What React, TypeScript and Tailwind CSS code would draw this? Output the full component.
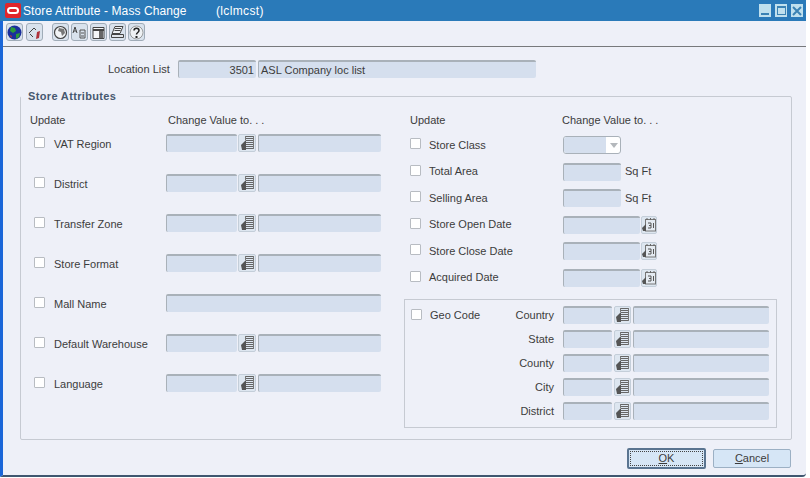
import React from "react";

// Small helpers for the form widgets
const Field = ({ className = "", value }: { className?: string; value?: string }) => (
  <div
    className={`h-[18px] bg-[#d5dfee] border-t-2 border-l border-[#a9b1b9] rounded-[2px] text-[11px] leading-[16px] px-[2px] text-[#3c3c3c] ${className}`}
  >
    {value}
  </div>
);

const LovIcon = ({ className = "w-[17px]" }: { className?: string }) => (
  <div className={`h-[18px] shrink-0 bg-[#dde6f0] border border-[#c4ced9] rounded-[2px] flex items-center justify-center ${className}`}>
    <svg width="15" height="16" viewBox="0 0 15 16">
      <path d="M5 1.500h9M5 3.500h9M6 5.500h8M6 7.500h8M6 9.500h8M6 11.500h8M6 13.500h8" stroke="#666" strokeWidth="1" />
      <path d="M13.500 1v13M5.500 1v4" stroke="#777" strokeWidth="1" />
      <path d="M1 10l5-5v10H2z" fill="#555" />
    </svg>
  </div>
);

const CalIcon = () => (
  <div className="w-[16px] h-[18px] ml-[1px] bg-[#dde6f0] border border-[#c4ced9] rounded-[2px] flex items-center justify-center">
    <svg width="14" height="16" viewBox="0 0 14 16">
      <rect x="3.500" y="2.500" width="10" height="11.500" fill="#e4eaf1" stroke="#777" />
      <path d="M5 1v2M8.500 1v2M12 1v2" stroke="#666" />
      <path d="M6 6h3v2.500H7M9 8.500V11H6M11.500 6v5" stroke="#555" fill="none" />
      <path d="M0 11l4-4v7H1z" fill="#555" />
    </svg>
  </div>
);

const Check = ({ className = "" }: { className?: string }) => (
  <div className={`w-[11px] h-[11px] shrink-0 bg-white border border-[#b8bcc2] rounded-[1px] ${className}`} />
);

const LovField = ({ mall }: { mall?: boolean }) =>
  mall ? (
    <Field className="w-[215px]" />
  ) : (
    <div className="flex gap-[1px]">
      <Field className="w-[71px]" />
      <LovIcon className="w-[18px]" />
      <Field className="w-[123px] ml-[1px]" />
    </div>
  );

const leftRows = ["VAT Region", "District", "Transfer Zone", "Store Format", "Mall Name", "Default Warehouse", "Language"];
const geoRows = ["Country", "State", "County", "City", "District"];

const RightRow = ({ label, children }: { label: string; children: React.ReactNode }) => (
  <div className="flex items-center h-[18px]">
    <Check className="ml-[6px] -mt-[3px]" />
    <span className="ml-[8px] w-[134px]">{label}</span>
    {children}
  </div>
);

const ToolBtn = ({ children, className = "" }: { children: React.ReactNode; className?: string }) => (
  <div className={`w-[17px] h-[18px] bg-[#d9e2ed] border border-[#a0acb8] rounded-[3px] flex items-center justify-center ${className}`}>
    <svg width="15" height="15" viewBox="0 0 15 15">
      {children}
    </svg>
  </div>
);

export default function App() {
  return (
    <div className="w-[810px] h-[478px] bg-white font-['Liberation_Sans',Arial,sans-serif] text-[11px] text-[#3c3c3c] overflow-hidden">
      <div className="w-[806px] h-[477px] bg-[#eef0f8] border-l-[3px] border-b-2 border-l-[#1a66d8] border-b-[#3f5770] rounded-br-[4px] flex flex-col">
        {/* Title bar */}
        <div className="h-[21px] -ml-[3px] bg-[#2a7ab9] flex items-center text-white text-[12px] tracking-[0.1px] shrink-0">
          <div className="ml-[5px] w-[16px] h-[15px] bg-[#e0252b] rounded-[2px] flex items-center justify-center">
            <div className="w-[12px] h-[7px] border-2 border-white rounded-full" />
          </div>
          <span className="ml-[2px] w-[193px]">Store Attribute - Mass Change</span>
          <span className="tracking-[0.35px]">(lclmcst)</span>
          <div className="ml-auto mr-[3px] flex gap-[4px]">
            <div className="w-[12px] h-[13px] bg-[#bfe0ee] flex items-end justify-center pb-[2px]">
              <div className="w-[8px] h-[2px] bg-[#3a82b4]" />
            </div>
            <div className="w-[12px] h-[13px] bg-[#bfe0ee] flex items-center justify-center">
              <div className="w-[9px] h-[9px] border border-t-2 border-[#3a82b4]" />
            </div>
            <div className="w-[12px] h-[13px] bg-[#bfe0ee] flex items-center justify-center">
              <svg width="10" height="10" viewBox="0 0 10 10">
                <path d="M1 1l8 8M9 1l-8 8" stroke="#3a82b4" strokeWidth="2" />
              </svg>
            </div>
          </div>
        </div>

        {/* Toolbar */}
        <div className="h-[22px] flex items-center pl-[3px] gap-[2px] shrink-0">
          <ToolBtn>
            <circle cx="7.500" cy="7.500" r="7" fill="#1a2f9c" />
            <path d="M4 2l4 1 1 3-3 2-3-2zM9 9l4-1-1 4-3 2z" fill="#2a9a3a" />
            <path d="M3 10l2 1-1 2z" fill="#c8342c" />
          </ToolBtn>
          <ToolBtn className="ml-[1px]">
            <path d="M2 8l5-5 2 2M3 9l3 3" stroke="#444" strokeWidth="1" fill="none" />
            <path d="M10 7l3-1-1 7-3 1z" fill="#b0333c" />
          </ToolBtn>
          <ToolBtn className="ml-[7px]">
            <circle cx="7.500" cy="7.500" r="6" fill="#f2f4f6" stroke="#444" strokeWidth="1.200" />
            <path d="M6 3l5 1 1 4-3 3-1-4-3-1z" fill="#777" />
          </ToolBtn>
          <ToolBtn>
            <path d="M1 8l2-6 2 6M2 6h2" stroke="#444" fill="none" />
            <path d="M8 5v8M8 5h5v8H8M9 8h3M9 11h3" stroke="#555" fill="none" />
          </ToolBtn>
          <ToolBtn>
            <path d="M2 2.500h11v11H2z" fill="#f4f6f8" stroke="#444" />
            <path d="M2 5h11" stroke="#444" strokeWidth="2" />
            <path d="M8 6v7h4V6z" fill="#666" />
          </ToolBtn>
          <ToolBtn>
            <path d="M5 1.500h8L10 8.500H2z" fill="#eef1f4" stroke="#444" />
            <path d="M5 3.500h6M4.500 5.500h6" stroke="#444" />
            <path d="M1.500 9.500h12v3h-12z" fill="#dfe3e8" stroke="#444" />
          </ToolBtn>
          <ToolBtn>
            <circle cx="7.500" cy="7.500" r="6.500" fill="#eef1f4" stroke="#888" strokeWidth="0.800" />
            <path d="M5 5.500c0-3 5-3 5 0 0 2-2.500 2-2.500 4" stroke="#222" strokeWidth="1.500" fill="none" />
            <path d="M6.500 11h2v2h-2z" fill="#222" />
          </ToolBtn>
        </div>

        <div className="mt-[3px] border-t border-[#77797c] shrink-0" />

        {/* Location list */}
        <div className="mt-[13px] flex items-center shrink-0">
          <span className="ml-[105px] w-[70px]">Location List</span>
          <Field className="w-[78px] text-right" value="3501" />
          <Field className="w-[278px] ml-[2px]" value="ASL Company loc list" />
        </div>

        {/* Store Attributes panel */}
        <div className="relative ml-[17px] mt-[18px] w-[772px] h-[344px] border border-[#c6cad2] rounded-[2px] flex shrink-0">
          <div className="absolute -top-[8px] left-[0px] pl-[7px] pr-[14px] bg-[#eef0f8] text-[11px] font-bold text-[#47586f] leading-[14px] tracking-[0.35px]">
            Store Attributes
          </div>

          {/* Left column */}
          <div className="w-[383px] pl-[9px] pt-[16px] shrink-0">
            <div className="flex h-[14px] items-center">
              <span className="w-[138px]">Update</span>
              <span>Change Value to. . .</span>
            </div>
            <div className="mt-[7px] flex flex-col gap-[22px]">
              {leftRows.map((label) => (
                <div key={label} className="flex items-center h-[18px]">
                  <Check className="ml-[4px] -mt-[1px]" />
                  <span className="ml-[9px] w-[112px] pt-[2px]">{label}</span>
                  <LovField mall={label === "Mall Name"} />
                </div>
              ))}
            </div>
          </div>

          {/* Right column */}
          <div className="pt-[16px] w-[373px]">
            <div className="flex h-[14px] items-center pl-[6px]">
              <span className="w-[152px]">Update</span>
              <span>Change Value to. . .</span>
            </div>
            <div className="mt-[9px] flex flex-col gap-[8.5px]">
              <RightRow label="Store Class">
                <div className="w-[58px] h-[18px] bg-white border border-[#a9b1b9] rounded-[3px] flex items-center">
                  <div className="w-[42px] h-[16px] bg-[#d5dfee] rounded-l-[2px]" />
                  <div className="ml-[4px] border-x-[4px] border-x-transparent border-t-[5px] border-t-[#b4b8bc]" />
                </div>
              </RightRow>
              <RightRow label="Total Area">
                <Field className="w-[58px]" />
                <span className="ml-[4px]">Sq Ft</span>
              </RightRow>
              <RightRow label="Selling Area">
                <Field className="w-[58px]" />
                <span className="ml-[4px]">Sq Ft</span>
              </RightRow>
              <RightRow label="Store Open Date">
                <Field className="w-[77px]" />
                <CalIcon />
              </RightRow>
              <RightRow label="Store Close Date">
                <Field className="w-[77px]" />
                <CalIcon />
              </RightRow>
              <RightRow label="Acquired Date">
                <Field className="w-[77px]" />
                <CalIcon />
              </RightRow>
            </div>

            {/* Geo code box */}
            <div className="mt-[12px] h-[129px] border border-[#c6cad2] flex pt-[6px]">
              <Check className="ml-[6px] mt-[3px]" />
              <span className="ml-[8px] mt-[1px] w-[60px]">Geo Code</span>
              <div className="flex flex-col gap-[6px]">
                {geoRows.map((label) => (
                  <div key={label} className="flex items-center h-[18px]">
                    <span className="w-[64px] text-right pt-[1px]">{label}</span>
                    <Field className="w-[49px] ml-[9px]" />
                    <LovIcon className="ml-[2px]" />
                    <Field className="w-[136px] ml-[2px]" />
                  </div>
                ))}
              </div>
            </div>
          </div>
        </div>

        {/* Buttons */}
        <div className="mt-[8px] flex justify-end pr-[15px] gap-[7px] items-center shrink-0">
          <button className="w-[79px] h-[21px] bg-[#d6e6f6] border-2 border-[#5a7490] rounded-[2px] p-[1px]">
            <div className="h-full border border-dotted border-[#444] flex items-center justify-center leading-none">
              <span className="underline">O</span>K
            </div>
          </button>
          <button className="w-[78px] h-[19px] bg-[#d6e6f6] border border-[#9cb0c4] rounded-[2px] flex items-center justify-center">
            <span className="underline">C</span>ancel
          </button>
        </div>
      </div>
    </div>
  );
}
